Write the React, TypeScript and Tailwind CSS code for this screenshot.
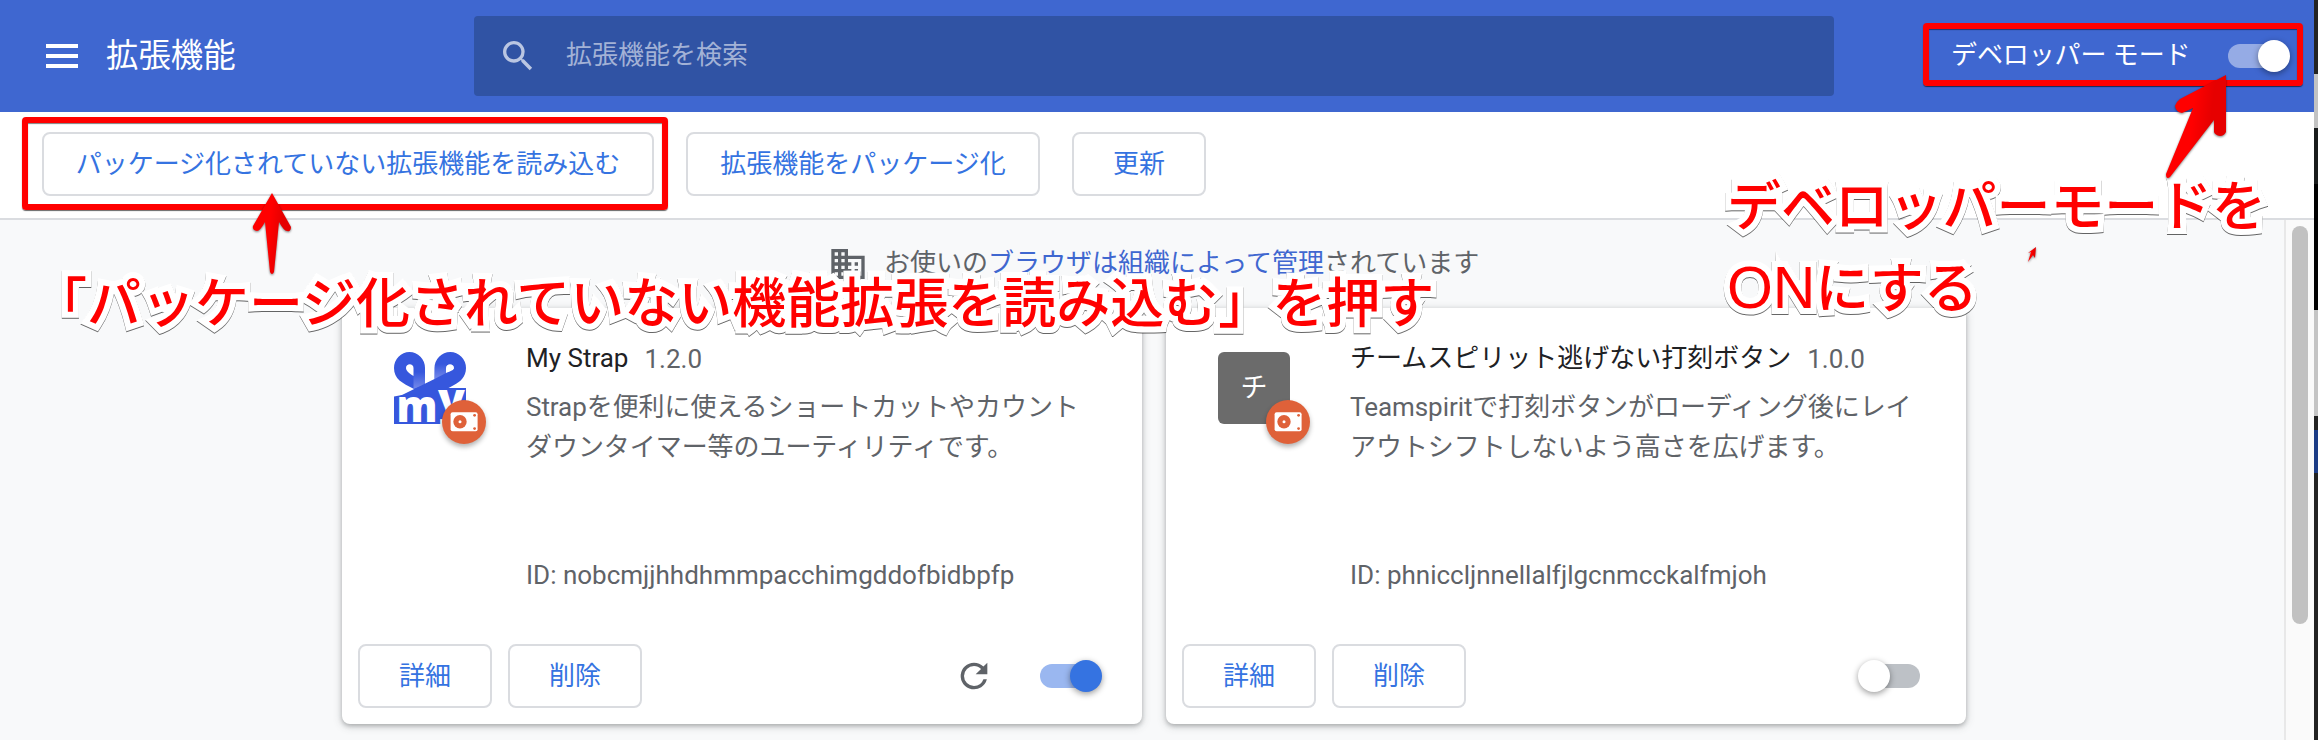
import React from "react";

function Toggle({ on, light }: { on: boolean; light?: boolean }) {
  const bar = light ? "bg-white/45" : on ? "bg-[#9ab7f0]" : "bg-[#bdc1c6]";
  const knob = light ? "bg-white" : on ? "bg-[#3573e1]" : "bg-white";
  return (
    <div className={`flex h-8 w-[68px] items-center ${on ? "justify-end" : "justify-start"}`}>
      <div className="relative flex h-6 w-14 items-center">
        <div className={`h-6 w-14 rounded-full ${bar} ${on ? "-translate-x-1.5" : "translate-x-1.5"}`} />
        <div
          className={`absolute h-8 w-8 rounded-full shadow-[0_2px_6px_rgba(0,0,0,0.4)] ${knob} ${on ? "right-0" : "left-0"}`}
        />
      </div>
    </div>
  );
}

function Button({ children, className }: { children: React.ReactNode; className: string }) {
  return (
    <button
      className={`flex h-16 shrink-0 items-center justify-center rounded-lg border-2 border-[#dadce0] bg-white text-[26px] leading-none whitespace-nowrap text-[#3573e1] ${className}`}
    >
      {children}
    </button>
  );
}

function Badge() {
  return (
    <div className="absolute top-12 left-12 h-11 w-11 rounded-full bg-[#df6139] shadow-[0_3px_5px_rgba(0,0,0,0.3)]">
      <svg viewBox="0 0 44 44" className="h-11 w-11">
        <rect x="8.6" y="12.2" width="27" height="19" rx="2" fill="#fff" />
        <circle cx="18" cy="21.8" r="6.7" fill="#df6139" />
        <circle cx="18" cy="21.8" r="1.5" fill="#fff" />
        <circle cx="32.6" cy="15.3" r="1.4" fill="#df6139" />
        <circle cx="32.6" cy="28.6" r="1.4" fill="#df6139" />
      </svg>
    </div>
  );
}

function StrapIcon() {
  return (
    <svg viewBox="0 0 72 72" className="h-[72px] w-[72px]">
      <defs>
        <linearGradient id="fade" x1="0" y1="0" x2="0" y2="1">
          <stop offset="0" stopColor="#8b9bee" stopOpacity="0" />
          <stop offset="1" stopColor="#8b9bee" stopOpacity="0.75" />
        </linearGradient>
      </defs>
      <path
        fillRule="evenodd"
        fill="#3657dd"
        d="M31 38V16A15.500 16 0 0 0 0 16C0 27 8 31 20 37ZM19.500 24C15 21 12 19 12 16C12 11 19.500 11 19.500 16Z"
      />
      <path d="M19.500 20H31V33L19.500 37Z" fill="url(#fade)" />
      <path
        fillRule="evenodd"
        fill="#3657dd"
        d="M40.500 27V16A15.750 16 0 0 1 72 16C72 25 66 30 60 33L40 44L2 46L10 42ZM52 21V16C52 11 60 11 60 16C60 18 57 19 52 21Z"
      />
      <path d="M40.500 12H52V21L40.500 27Z" fill="url(#fade)" />
      <path d="M0 44.500L8 43L40 42L45 36H72V72H0Z" fill="#3657dd" />
      <text
        x="2.500"
        y="69.500"
        textLength="41"
        lengthAdjust="spacingAndGlyphs"
        fontFamily="Open Sans"
        fontWeight="800"
        fontSize="44"
        fill="#fff"
      >
        m
      </text>
      <text x="44" y="63" fontFamily="Open Sans" fontWeight="800" fontSize="44" fill="#fff">
        y
      </text>
    </svg>
  );
}

type Ext = { name: string; version: string; lines: string[]; id: string; on: boolean; icon: React.ReactNode };

function Card({ ext }: { ext: Ext }) {
  return (
    <section className="flex h-[416px] w-[800px] flex-col rounded-lg bg-white shadow-[0_2px_4px_rgba(60,64,67,0.3),0_2px_8px_1px_rgba(60,64,67,0.18)]">
      <div className="flex h-[320px] pt-8 pl-[52px]">
        <div className="relative mt-3 h-[72px] w-[72px] shrink-0">
          {ext.icon}
          <Badge />
        </div>
        <div className="flex flex-col pl-[60px] text-[26px] text-[#5f6368]">
          <div className="-mt-0.5 flex h-10 items-center gap-4 leading-10">
            <span className="text-[#202124]">{ext.name}</span>
            <span className="pt-0.5">{ext.version}</span>
          </div>
          <div className="mt-[9px] h-[168px] leading-10 tracking-[-0.06px] whitespace-nowrap">
            {ext.lines.map((l) => (
              <div key={l} className="h-10">
                {l}
              </div>
            ))}
          </div>
          <div className="leading-10">ID: {ext.id}</div>
        </div>
      </div>
      <div className="flex items-center gap-4 pt-4 pr-10 pl-4">
        <Button className="w-[134px]">詳細</Button>
        <Button className="w-[134px]">削除</Button>
        <div className="flex-1" />
        {ext.on && (
          <svg viewBox="0 0 24 24" className="mr-6 h-10 w-10" fill="#5f6368">
            <path d="M17.650 6.350A7.958 7.958 0 0 0 12 4a8 8 0 1 0 7.730 10h-2.080A5.990 5.990 0 0 1 12 18a6 6 0 1 1 0-12c1.660 0 3.140.690 4.220 1.780L13 11h7V4l-2.350 2.350z" />
          </svg>
        )}
        <Toggle on={ext.on} />
      </div>
    </section>
  );
}

const exts: Ext[] = [
  {
    name: "My Strap",
    version: "1.2.0",
    lines: ["Strapを便利に使えるショートカットやカウント", "ダウンタイマー等のユーティリティです。"],
    id: "nobcmjjhhdhmmpacchimgddofbidbpfp",
    on: true,
    icon: <StrapIcon />,
  },
  {
    name: "チームスピリット逃げない打刻ボタン",
    version: "1.0.0",
    lines: ["Teamspiritで打刻ボタンがローディング後にレイ", "アウトシフトしないよう高さを広げます。"],
    id: "phniccljnnellalfjlgcnmcckalfmjoh",
    on: false,
    icon: (
      <div className="flex h-[72px] w-[72px] items-center justify-center rounded-md bg-[#6b6b6b] text-[27px] text-white">
        チ
      </div>
    ),
  },
];

const note =
  "absolute text-[54px] font-medium whitespace-nowrap text-[#ff0000] [paint-order:stroke_fill] [stroke-linejoin:round] [-webkit-text-stroke:12px_white] [filter:drop-shadow(0_1px_0.5px_rgba(0,0,0,0.6))]";

export default function App() {
  return (
    <div className="relative flex h-[740px] w-[2318px] overflow-hidden bg-[#f8f9fa] font-['Roboto','Noto_Sans_CJK_JP',sans-serif]">
      <div className="flex w-[2314px] flex-col">
        <header className="flex h-28 shrink-0 items-center bg-[#3f67d0] pl-[46px] text-white">
          <div className="flex w-8 flex-col gap-1.5">
            <div className="h-1 bg-white" />
            <div className="h-1 bg-white" />
            <div className="h-1 bg-white" />
          </div>
          <h1 className="w-[368px] pl-7 text-[32.4px] leading-none">拡張機能</h1>
          <div className="ml-7 flex h-20 w-[1360px] shrink-0 items-center rounded bg-[#3053a4] pl-6">
            <svg viewBox="0 0 24 24" className="h-10 w-10" fill="#bac6e2">
              <path d="M15.500 14h-.790l-.280-.270A6.471 6.471 0 0 0 16 9.500 6.500 6.500 0 1 0 9.500 16c1.610 0 3.090-.590 4.230-1.570l.270.280v.790l5 4.990L20.490 19l-4.990-5zm-6 0C7.010 14 5 11.990 5 9.500S7.010 5 9.500 5 14 7.010 14 9.500 11.990 14 9.500 14z" />
            </svg>
            <span className="pb-0.5 pl-7 text-[26px] leading-none text-[#a3b2d6]">拡張機能を検索</span>
          </div>
          <div className="ml-[117px] flex items-center">
            <span className="w-[271px] pb-0.5 text-[26px] leading-none tracking-[-0.1px] whitespace-nowrap">
              デベロッパー モード
            </span>
            <Toggle on light />
          </div>
        </header>
        <div className="flex h-[108px] shrink-0 items-center gap-8 border-b-2 border-[#dadce0] bg-white pb-0.5 pl-[42px]">
          <Button className="w-[612px]">パッケージ化されていない拡張機能を読み込む</Button>
          <Button className="w-[354px]">拡張機能をパッケージ化</Button>
          <Button className="w-[134px]">更新</Button>
        </div>
        <div className="flex h-[520px]">
          <main className="flex w-[2284px] flex-col">
            <div className="flex h-[88px] items-center pl-[828px] text-[26px] text-[#5f6368]">
              <svg viewBox="0 0 24 24" className="h-10 w-10" fill="#5f6368">
                <path d="M12 7V3H2v18h20V7H12zM6 19H4v-2h2v2zm0-4H4v-2h2v2zm0-4H4V9h2v2zm0-4H4V5h2v2zm4 12H8v-2h2v2zm0-4H8v-2h2v2zm0-4H8V9h2v2zm0-4H8V5h2v2zm10 12h-8v-2h2v-2h-2v-2h2v-2h-2V9h8v10zm-2-8h-2v2h2v-2zm0 4h-2v2h2v-2z" />
              </svg>
              <p className="pb-[3px] pl-4 leading-none">
                お使いの<span className="text-[#3f67d0]">ブラウザは組織によって管理</span>されています
              </p>
            </div>
            <div className="flex gap-6 pl-[342px]">
              {exts.map((e) => (
                <Card key={e.id} ext={e} />
              ))}
            </div>
          </main>
          <div className="w-[30px] border-l-2 border-[#e8e8e8] bg-[#fafafa] pt-1.5 pl-1.5">
            <div className="h-[398px] w-4 rounded-full bg-[#c1c1c1]" />
          </div>
        </div>
      </div>
      <div className="flex w-1 flex-col bg-[#222222]">
        <div className="h-[74px] bg-[#232323]" />
        <div className="h-[54px] bg-[#c2c2c2]" />
        <div className="h-14 bg-[#191c1c]" />
        <div className="h-[126px] bg-black" />
        <div className="h-[106px] bg-[#c4c4c4]" />
        <div className="h-3.5 bg-[#222222]" />
        <div className="h-[43px] bg-[#1b3b85]" />
      </div>

      <div className="absolute top-[117px] left-[22px] h-[93px] w-[646px] rounded-sm border-6 border-[#ff0000] shadow-[0_1px_1px_rgba(0,0,0,0.6),inset_0_1px_1px_rgba(0,0,0,0.5)]" />
      <div className="absolute top-[23px] left-[1923px] h-[63px] w-[380px] rounded-sm border-6 border-[#ff0000] shadow-[0_1px_1px_rgba(0,0,0,0.6),inset_0_1px_1px_rgba(0,0,0,0.5)]" />
      <div className={`${note} top-[264px] left-[33px] leading-[82px]`}>
        「パッケージ化されていない機能拡張を読み込む」を押す
      </div>
      <div className={`${note} top-[167px] left-[1727px] leading-[82px] tracking-[-0.1px]`}>
        <div className="h-[82px]">デベロッパーモードを</div>
        <div className="h-[82px]">
          <span className="font-['Liberation_Sans',sans-serif] text-[59px] leading-none font-normal">ON</span>にする
        </div>
      </div>
      <svg className="absolute top-0 left-0 h-[740px] w-[2318px] [filter:drop-shadow(0_1px_1px_rgba(0,0,0,0.5))]" viewBox="0 0 2318 740">
        <defs>
          <linearGradient id="arrow" x1="0" y1="0" x2="1" y2="0.2">
            <stop offset="0.5" stopColor="#ff0000" />
            <stop offset="0.8" stopColor="#e60000" />
          </linearGradient>
        </defs>
        <g fill="url(#arrow)">
          <path d="M272 193L291 227Q291 232 287 231Q284 231 279 222L274 272Q272 276 270 272L265 222Q260 231 257 231Q252 230 253 226Z" />
          <path d="M2226 75V132Q2224 136 2220 136Q2215 135 2214 132V120L2170 177Q2166 180 2166 174L2193 108L2182 113Q2176 112 2175 106Q2176 102 2180 99Z" />
          <path d="M2036 247L2035 258L2033 255L2028 262L2031 252L2028 253Z" />
        </g>
      </svg>
    </div>
  );
}
